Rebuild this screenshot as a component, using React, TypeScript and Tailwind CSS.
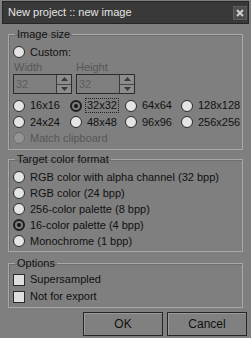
import React from 'react';

function Radio({ checked = false, disabled = false }: { checked?: boolean; disabled?: boolean }) {
  if (disabled) {
    return <span className="w-[12px] h-[12px] shrink-0 rounded-full border border-[#6c6c6c] bg-[#949494]" />;
  }
  if (checked) {
    return (
      <span className="w-[12px] h-[12px] shrink-0 rounded-full border-2 border-[#1e1e1e] bg-[#7c7c7c] flex items-center justify-center">
        <span className="w-[4px] h-[4px] rounded-full bg-[#151515]" />
      </span>
    );
  }
  return <span className="w-[12px] h-[12px] shrink-0 rounded-full border border-[#2a2a2a] bg-[#e4e4e4]" />;
}

function RadioRow({ label, checked, disabled, focus }: { label: string; checked?: boolean; disabled?: boolean; focus?: boolean }) {
  return (
    <div className="flex items-center gap-[5px] h-full">
      <Radio checked={checked} disabled={disabled} />
      <span
        className={
          (disabled ? 'text-[#575757] ' : 'text-[#111] ') +
          (focus ? 'outline-1 outline-dotted outline-[#222] px-[1px] -ml-[1px] leading-[13px]' : '')
        }
      >
        {label}
      </span>
    </div>
  );
}

function Spinner() {
  return (
    <div className="w-[59px] h-[20px] flex border border-[#2b2b2b] bg-[#7f7f7f]">
      <div className="flex-1 pl-[2px] flex items-center text-[#5c5c5c]">32</div>
      <div className="w-[15px] flex flex-col border-l border-[#3a3a3a] bg-[#8c8c8c]">
        <div className="flex-1 flex items-center justify-center border-b border-[#4a4a4a]">
          <svg width="7" height="4" viewBox="0 0 7 4"><path d="M0 4 L3.5 0 L7 4 Z" fill="#3a3a3a" /></svg>
        </div>
        <div className="flex-1 flex items-center justify-center">
          <svg width="7" height="4" viewBox="0 0 7 4"><path d="M0 0 L3.5 4 L7 0 Z" fill="#3a3a3a" /></svg>
        </div>
      </div>
    </div>
  );
}

function Checkbox({ label }: { label: string }) {
  return (
    <div className="flex items-center gap-[5px] h-[17px]">
      <span className="w-[12px] h-[12px] shrink-0 border border-[#2a2a2a] bg-[#dedede]" />
      <span className="text-[#111]">{label}</span>
    </div>
  );
}

function Group({ title, className, children }: { title: string; className?: string; children: React.ReactNode }) {
  return (
    <fieldset className={'border border-[#a9a9a9] shadow-[inset_1px_1px_0_#6e6e6e] ' + (className || '')}>
      <legend className="ml-[6px] px-[2px] leading-[14px] text-[#111]">{title}</legend>
      {children}
    </fieldset>
  );
}

export default function App() {
  const colorFormats = [
    { label: 'RGB color with alpha channel (32 bpp)' },
    { label: 'RGB color (24 bpp)' },
    { label: '256-color palette (8 bpp)' },
    { label: '16-color palette (4 bpp)', checked: true },
    { label: 'Monochrome (1 bpp)' },
  ];

  return (
    <div
      className="w-[251px] h-[338px] bg-[#7f7f7f] px-[2px] pt-[1px] flex flex-col text-[11px] overflow-hidden"
      style={{ fontFamily: '"Liberation Sans", Arial, sans-serif' }}
    >
      {/* title bar */}
      <div className="h-[23px] shrink-0 bg-[#393939] border border-[#262626] flex items-center justify-between pl-[5px] pr-[1px]">
        <span className="text-[11px] text-[#e4e4e4]">New project :: new image</span>
        <div className="w-[14px] h-[14px] bg-[#4d4d4d] border border-[#5e5e5e] flex items-center justify-center">
          <svg width="8" height="8" viewBox="0 0 8 8">
            <path d="M1 1 L7 7 M7 1 L1 7" stroke="#cfcfcf" strokeWidth="2" />
          </svg>
        </div>
      </div>

      <div className="px-[6px] flex flex-col">
        <Group title="Image size" className="mt-[3px]">
          <div className="pl-[4px] pt-[3px] pb-[3px] flex flex-col">
            <div className="h-[16px]"><RadioRow label="Custom:" /></div>
            <div className="flex gap-[4px] h-[14px] items-center text-[#565656]">
              <span className="w-[59px] pl-[1px]">Width</span>
              <span>Height</span>
            </div>
            <div className="flex gap-[4px]">
              <Spinner />
              <Spinner />
            </div>
            <div className="grid grid-cols-[57px_55px_56px_1fr] mt-[3px]">
              <div className="h-[17px]"><RadioRow label="16x16" /></div>
              <div className="h-[17px]"><RadioRow label="32x32" checked focus /></div>
              <div className="h-[17px]"><RadioRow label="64x64" /></div>
              <div className="h-[17px]"><RadioRow label="128x128" /></div>
              <div className="h-[16px]"><RadioRow label="24x24" /></div>
              <div className="h-[16px]"><RadioRow label="48x48" /></div>
              <div className="h-[16px]"><RadioRow label="96x96" /></div>
              <div className="h-[16px]"><RadioRow label="256x256" /></div>
            </div>
            <div className="h-[16px]"><RadioRow label="Match clipboard" disabled /></div>
          </div>
        </Group>

        <Group title="Target color format" className="mt-[2px]">
          <div className="pl-[4px] pt-[3px] pb-[2px] flex flex-col">
            {colorFormats.map((f) => (
              <div key={f.label} className="h-[16px]">
                <RadioRow label={f.label} checked={f.checked} />
              </div>
            ))}
          </div>
        </Group>

        <Group title="Options" className="mt-[4px]">
          <div className="pl-[4px] pt-[1px] pb-[2px] flex flex-col">
            <Checkbox label="Supersampled" />
            <Checkbox label="Not for export" />
          </div>
        </Group>
      </div>

      <div className="flex justify-end gap-[4px] pr-[2px] mt-[4px]">
        <button className="w-[80px] h-[24px] border border-[#262626] bg-[#808080] shadow-[inset_1px_1px_0_#9a9a9a] text-[#111] text-[12px]">OK</button>
        <button className="w-[80px] h-[24px] border border-[#262626] bg-[#808080] shadow-[inset_1px_1px_0_#9a9a9a] text-[#111] text-[12px]">Cancel</button>
      </div>
    </div>
  );
}
